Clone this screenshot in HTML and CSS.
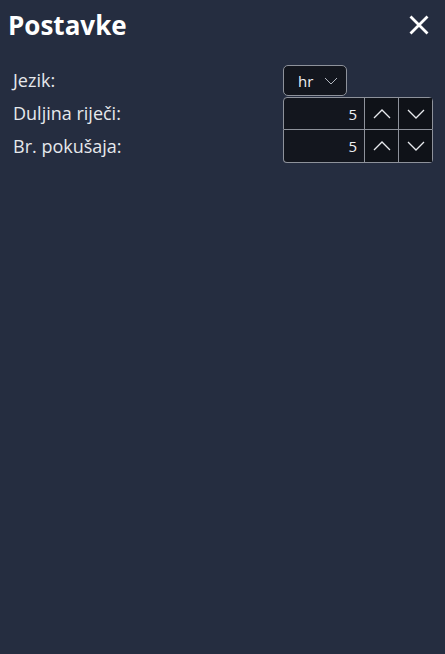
FILE: index.html
```html
<!DOCTYPE html>
<html lang="hr">
<head>
<meta charset="utf-8">
<title>Postavke</title>
<link rel="stylesheet" href="styles.css">
</head>
<body>
<div class="dialog">
  <header class="head">
    <h1 class="title">Postavke</h1>
    <button class="close" aria-label="Zatvori">
      <svg width="20" height="20" viewBox="0 0 20 20"><path d="M1.5 1.5 L18.5 18.5 M18.5 1.5 L1.5 18.5" stroke="#fff" stroke-width="2.8" fill="none"/></svg>
    </button>
  </header>
  <div class="settings">
    <label class="lbl">Jezik:</label>
    <div class="ctl">
      <div class="select"><span>hr</span>
        <svg width="14" height="8" viewBox="0 0 14 8"><path d="M1 1 L7 7 L13 1" stroke="#b4b8c0" stroke-width="1" fill="none"/></svg>
      </div>
    </div>
    <label class="lbl">Duljina riječi:</label>
    <div class="ctl">
      <div class="num top">
        <span class="val">5</span>
        <span class="btn"><svg width="18" height="10" viewBox="0 0 18 10"><path d="M1 9 L9 1 L17 9" stroke="#e8eaee" stroke-width="1.3" fill="none"/></svg></span>
        <span class="btn"><svg width="18" height="10" viewBox="0 0 18 10"><path d="M1 1 L9 9 L17 1" stroke="#e8eaee" stroke-width="1.3" fill="none"/></svg></span>
      </div>
    </div>
    <label class="lbl">Br. pokušaja:</label>
    <div class="ctl">
      <div class="num bottom">
        <span class="val">5</span>
        <span class="btn"><svg width="18" height="10" viewBox="0 0 18 10"><path d="M1 9 L9 1 L17 9" stroke="#e8eaee" stroke-width="1.3" fill="none"/></svg></span>
        <span class="btn"><svg width="18" height="10" viewBox="0 0 18 10"><path d="M1 1 L9 9 L17 1" stroke="#e8eaee" stroke-width="1.3" fill="none"/></svg></span>
      </div>
    </div>
  </div>
</div>
</body>
</html>
```
FILE: styles.css
```css
html, body {
  margin: 0;
  padding: 0;
  background: #252d40;
  height: 100%;
}
body {
  font-family: "Open Sans", "Noto Sans", sans-serif;
  color: #e6e8ec;
}
.head {
  display: flex;
  align-items: center;
  justify-content: space-between;
  padding: 7px 16px 0 8px;
  height: 36px;
}
.title {
  margin: 0;
  font-size: 26px;
  font-weight: 700;
  color: #fff;
  line-height: 36px;
}
.close {
  background: none;
  border: 0;
  padding: 0;
  width: 20px;
  height: 20px;
  display: flex;
}
.settings {
  display: grid;
  grid-template-columns: 1fr 150px;
  padding: 22px 12px 0 13px;
  align-items: center;
}
.lbl {
  font-size: 18px;
  line-height: 24px;
  padding-bottom: 2px;
}
.ctl {
  display: flex;
}
.select {
  box-sizing: border-box;
  width: 64px;
  height: 31px;
  margin-bottom: 1px;
  display: flex;
  align-items: center;
  justify-content: space-between;
  padding: 0 8px 0 14px;
  background: #13161e;
  border: 1px solid #8e929b;
  border-radius: 5px;
  font-size: 15px;
  color: #eef0f3;
}
.num {
  box-sizing: border-box;
  width: 150px;
  height: 33px;
  display: flex;
  background: #13161e;
  border: 1px solid #8e929b;
  font-size: 15px;
}
.num.top { border-radius: 4px 4px 0 0; }
.num.bottom { border-radius: 0 0 4px 4px; border-top: 0; }
.val {
  flex: 1;
  display: flex;
  align-items: center;
  justify-content: flex-end;
  padding-right: 7px;
  color: #eef0f3;
}
.btn {
  width: 33px;
  display: flex;
  align-items: center;
  justify-content: center;
  border-left: 1px solid #8e929b;
  background: #0f1218;
}
```
